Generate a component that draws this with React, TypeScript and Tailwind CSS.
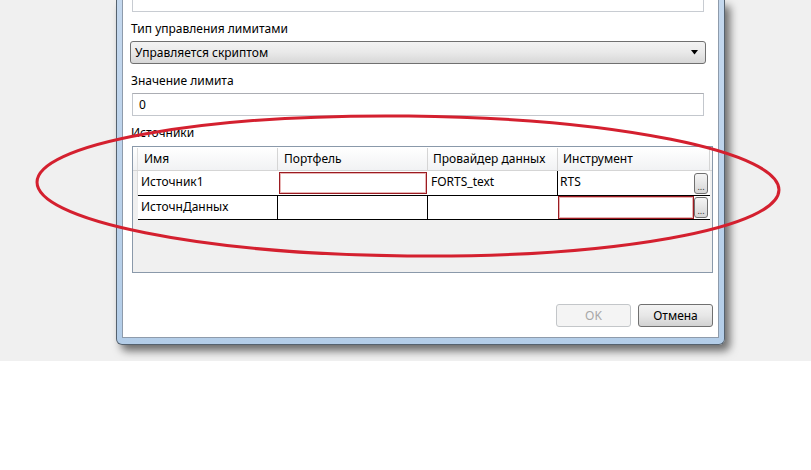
import React from "react";

const font = { fontFamily: '"Noto Sans", "Open Sans", sans-serif' };

function DotsButton({ h }: { h: string }) {
  return (
    <div
      className={`w-[14px] ${h} rounded-[3px] border border-[#707070] bg-gradient-to-b from-[#f5f5f5] to-[#d6d6d6] flex items-end justify-center text-[9px] leading-[9px] text-[#333] pb-[2px]`}
    >
      ...
    </div>
  );
}

export default function App() {
  return (
    <div className="relative w-[811px] h-[470px] bg-white overflow-hidden text-[12px] text-black" style={font}>
      <div className="h-[361px] bg-[#f0f0f0] pl-[116px]">
        {/* window */}
        <div className="w-[609px] h-[345px] flex flex-col rounded-b-[6px] border-x border-b border-[#55626f] bg-gradient-to-b from-[#c4d8ee] to-[#b3cde8] px-[5px] pb-[6px] pt-0 shadow-[5px_6px_9px_rgba(0,0,0,0.55)]">
          <div className="flex-1 border-x border-b border-[#8e9bab] border-t-0 bg-white pl-[7px] pr-[5px] flex flex-col">
            {/* top textbox (cut) */}
            <div className="ml-[2px] w-[572px] h-[12px] border-x border-b border-[#c8ccd2]" />
            <div className="mt-[9px] h-[16px] leading-[16px] pl-[1px]">Тип управления лимитами</div>
            <div className="mt-[4px] w-[576px] h-[23px] rounded-[3px] border border-[#707070] bg-gradient-to-b from-[#f3f3f3] via-[#e9e9e9] to-[#d7d7d7] flex items-center justify-between pl-[4px] pr-[6px]">
              <span>Управляется скриптом</span>
              <svg width="8" height="5" viewBox="0 0 8 5">
                <path d="M0 0 H7 L3.5 4.5 Z" fill="#000" />
              </svg>
            </div>
            <div className="mt-[9px] h-[16px] leading-[16px] pl-[1px]">Значение лимита</div>
            <div className="mt-[4px] ml-[2px] w-[572px] h-[23px] border border-[#c3c7cd] border-t-[#abadb3] flex items-center pl-[6px]">
              0
            </div>
            <div className="mt-[9px] h-[16px] leading-[16px] pl-[1px]">Источники</div>
            {/* grid */}
            <div className="mt-[5px] ml-[2px] w-[581px] h-[127px] border border-[#8a99aa] bg-[#f0f0f0] flex flex-col">
              <div className="h-[1px] bg-white" />
              {/* header */}
              <div className="flex h-[23px] bg-gradient-to-b from-white to-[#f1f2f4] border-b border-[#d5d5d5]">
                <div className="w-[5px] border-r border-[#e0e0e0]" />
                <div className="w-[140px] border-r border-[#d5d5d5] pl-[6px] flex items-center">Имя</div>
                <div className="w-[150px] border-r border-[#d5d5d5] pl-[6px] flex items-center">Портфель</div>
                <div className="w-[130px] border-r border-[#d5d5d5] pl-[5px] flex items-center">Провайдер данных</div>
                <div className="w-[152px] border-r border-[#d5d5d5] pl-[5px] flex items-center">Инструмент</div>
              </div>
              {/* row 1 */}
              <div className="flex h-[25px]">
                <div className="w-[5px] bg-[#f0f0f0] border-r border-[#dcdcdc]" />
                <div className="w-[140px] bg-white border-b border-black pl-[3px] flex items-center pb-[2px]">Источник1</div>
                <div className="w-[150px] bg-white border-b border-black flex">
                  <div className="flex-1 m-[1px] border border-[#9b1c22] shadow-[inset_0_0_0_1px_rgba(190,40,40,0.35)]" />
                </div>
                <div className="w-[130px] bg-white border-b border-r border-black pl-[3px] flex items-center pb-[2px]">FORTS_text</div>
                <div className="w-[152px] bg-white border-b border-black pl-[2px] flex items-center justify-between pr-[2px]">
                  <span className="pb-[2px]">RTS</span>
                  <DotsButton h="h-[21px]" />
                </div>
              </div>
              {/* row 2 */}
              <div className="flex h-[24px]">
                <div className="w-[5px] bg-[#f0f0f0]" />
                <div className="w-[140px] bg-white border-b border-r border-black pl-[3px] flex items-center pb-[2px]">ИсточнДанных</div>
                <div className="w-[150px] bg-white border-b border-r border-black" />
                <div className="w-[130px] bg-white border-b border-black" />
                <div className="w-[152px] bg-white border-b border-black flex items-stretch pr-[2px]">
                  <div className="flex-1 border border-[#9b1c22] shadow-[inset_0_0_0_1px_rgba(190,40,40,0.35)]" />
                  <div className="flex items-center">
                    <DotsButton h="h-[21px]" />
                  </div>
                </div>
              </div>
              <div className="flex-1" />
            </div>
            {/* buttons */}
            <div className="mt-[31px] flex justify-end gap-[7px] pr-[0px]">
              <div className="w-[75px] h-[23px] rounded-[3px] border border-[#c3c6c9] bg-[#f4f4f4] flex items-center justify-center text-[#a7a7a7]">
                OK
              </div>
              <div className="w-[75px] h-[23px] rounded-[3px] border border-[#707070] bg-gradient-to-b from-[#f3f3f3] via-[#e7e7e7] to-[#d2d2d2] flex items-center justify-center">
                Отмена
              </div>
            </div>
          </div>
        </div>
      </div>
      {/* red hand-drawn ellipse annotation */}
      <svg className="absolute left-0 top-0 pointer-events-none" width="811" height="470" viewBox="0 0 811 470">
        <ellipse cx="408" cy="186" rx="371" ry="70" fill="none" stroke="#d4202f" strokeWidth="3" transform="rotate(0.6 408 186)" />
      </svg>
    </div>
  );
}
